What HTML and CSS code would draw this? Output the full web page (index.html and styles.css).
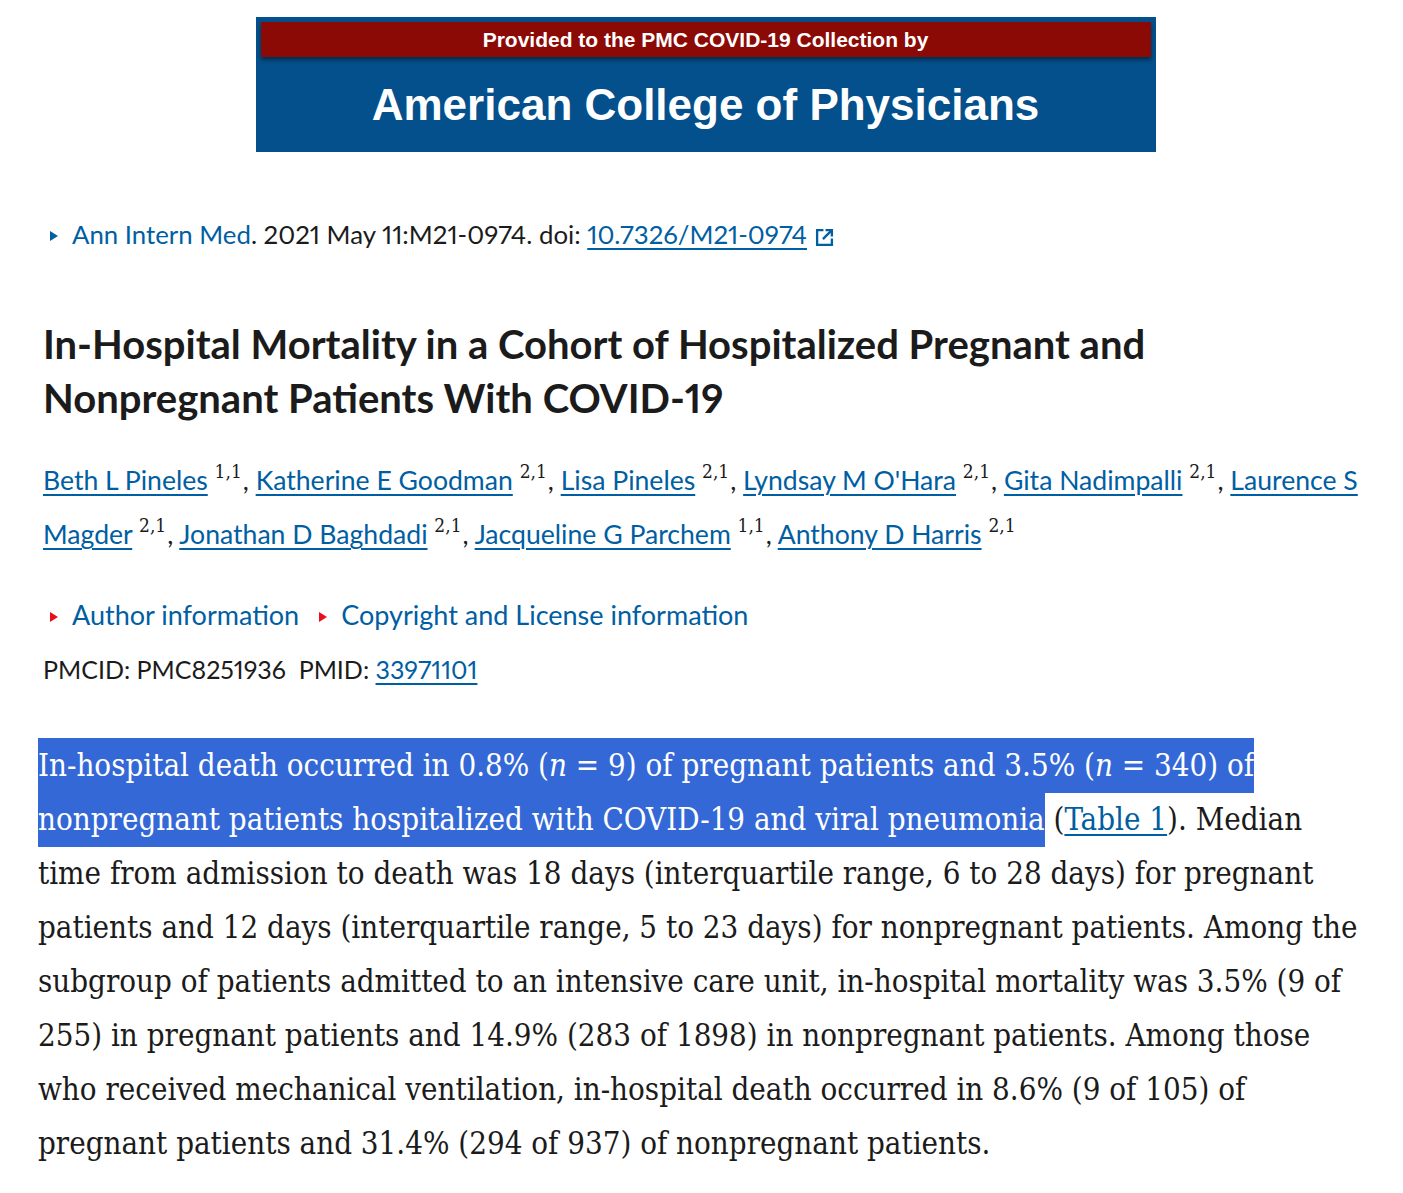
FILE: index.html
```html
<!DOCTYPE html>
<html lang="en">
<head>
<meta charset="utf-8">
<title>In-Hospital Mortality in a Cohort of Hospitalized Pregnant and Nonpregnant Patients With COVID-19</title>
<link rel="stylesheet" href="styles.css">
</head>
<body>
<div class="page">
  <div class="banner">
    <div class="banner-top">Provided to the PMC COVID-19 Collection by</div>
    <div class="banner-name">American College of Physicians</div>
  </div>

  <div class="citation">
    <span class="tri tri-blue"></span><a class="plain-link" href="#">Ann Intern Med</a>. 2021 May 11:M21-0974. doi: <a class="ul-link" href="#">10.7326/M21-0974</a>
    <svg class="ext" viewBox="0 0 18 18" width="19" height="19" aria-hidden="true">
      <path d="M8 2H2v14h14v-6" fill="none" stroke="#005ea2" stroke-width="2.2"/>
      <path d="M10 2h6v6" fill="none" stroke="#005ea2" stroke-width="2.2"/>
      <path d="M15.5 2.5L7.5 10.5" fill="none" stroke="#005ea2" stroke-width="2.2"/>
    </svg>
  </div>

  <h1 class="title">In-Hospital Mortality in a Cohort of Hospitalized Pregnant and Nonpregnant Patients With COVID-19</h1>

  <div class="authors">
    <a class="ul-link" href="#">Beth L Pineles</a> <sup>1,1</sup>, <a class="ul-link" href="#">Katherine E Goodman</a> <sup>2,1</sup>, <a class="ul-link" href="#">Lisa Pineles</a> <sup>2,1</sup>, <a class="ul-link" href="#">Lyndsay M O'Hara</a> <sup>2,1</sup>, <a class="ul-link" href="#">Gita Nadimpalli</a> <sup>2,1</sup>, <a class="ul-link" href="#">Laurence S Magder</a> <sup>2,1</sup>, <a class="ul-link" href="#">Jonathan D Baghdadi</a> <sup>2,1</sup>, <a class="ul-link" href="#">Jacqueline G Parchem</a> <sup>1,1</sup>, <a class="ul-link" href="#">Anthony D Harris</a> <sup>2,1</sup>
  </div>

  <div class="info-links">
    <span class="info-item"><span class="tri tri-red"></span><a class="plain-link" href="#">Author information</a></span>
    <span class="info-item"><span class="tri tri-red"></span><a class="plain-link" href="#">Copyright and License information</a></span>
  </div>
  <div class="ids">PMCID: PMC8251936&nbsp; PMID: <a class="ul-link" href="#">33971101</a></div>

  <p class="body-text"><span class="sel">In-hospital death occurred in 0.8% (<i>n</i> = 9) of pregnant patients and 3.5% (<i>n</i> = 340) of nonpregnant patients hospitalized with COVID-19 and viral pneumonia</span> (<a class="ul-link" href="#">Table 1</a>). Median time from admission to death was 18 days (interquartile range, 6 to 28 days) for pregnant patients and 12 days (interquartile range, 5 to 23 days) for nonpregnant patients. Among the subgroup of patients admitted to an intensive care unit, in-hospital mortality was 3.5% (9 of 255) in pregnant patients and 14.9% (283 of 1898) in nonpregnant patients. Among those who received mechanical ventilation, in-hospital death occurred in 8.6% (9 of 105) of pregnant patients and 31.4% (294 of 937) of nonpregnant patients.</p>
</div>
</body>
</html>
```

FILE: styles.css
```css
html, body {
  margin: 0;
  padding: 0;
  background: #ffffff;
}

.page {
  padding: 17px 30px 0 38px;
  font-family: Lato, "Open Sans", sans-serif;
  font-variant-numeric: proportional-nums;
  color: #1b1b1b;
}

.banner {
  width: 900px;
  height: 135px;
  margin: 0 auto;
  background: #04508c;
  padding: 5px;
  box-sizing: border-box;
  display: flex;
  flex-direction: column;
}

.banner-top {
  height: 35px;
  background: #8b0a05;
  color: #ffffff;
  font-family: "Liberation Sans", Arial, sans-serif;
  font-weight: bold;
  font-size: 21px;
  line-height: 36px;
  text-align: center;
  box-shadow: 0 3px 4px rgba(0, 0, 0, 0.45);
}

.banner-name {
  flex: 1;
  display: flex;
  align-items: center;
  justify-content: center;
  color: #ffffff;
  font-family: "Liberation Sans", Arial, sans-serif;
  font-weight: bold;
  font-size: 44px;
  padding-top: 5px;
}

a {
  color: #005ea2;
}

.plain-link {
  text-decoration: none;
}

.ul-link {
  text-decoration: underline;
  text-decoration-thickness: 2px;
  text-underline-offset: 4px;
}

.citation {
  margin-top: 55px;
  padding-left: 12px;
  font-size: 25.8px;
  line-height: 54px;
}

.tri {
  display: inline-block;
  width: 0;
  height: 0;
  border-top: 5px solid transparent;
  border-bottom: 5px solid transparent;
  border-left: 8px solid #005ea2;
  margin-right: 14px;
  vertical-align: 3px;
}

.tri-red {
  border-left-color: #e8101b;
}

.ext {
  vertical-align: -3px;
  margin-left: 1px;
}

.title {
  margin: 56px 0 0 5px;
  font-size: 40px;
  font-weight: bold;
  line-height: 54px;
  color: #1b1b1b;
}

.authors {
  margin: 28px 0 0 5px;
  font-size: 26.6px;
  line-height: 54px;
}

.authors sup {
  font-family: "DejaVu Serif Condensed", "DejaVu Serif", serif;
  font-size: 19px;
  line-height: 1;
  vertical-align: 12px;
  margin-right: 1px;
}

.info-links {
  margin: 27px 0 0 0;
  padding-left: 12px;
  font-size: 27px;
  line-height: 54px;
  display: flex;
  gap: 20px;
}

.ids {
  margin-left: 5px;
  font-size: 25px;
  line-height: 54px;
}

.body-text {
  margin: 42px 10px 0 0;
  font-family: "DejaVu Serif Condensed", "DejaVu Serif", serif;
  font-size: 31px;
  line-height: 54px;
  color: #1b1b1b;
}

.sel {
  background: #3468d6;
  color: #ffffff;
  padding: 9px 0 10px;
}
```
